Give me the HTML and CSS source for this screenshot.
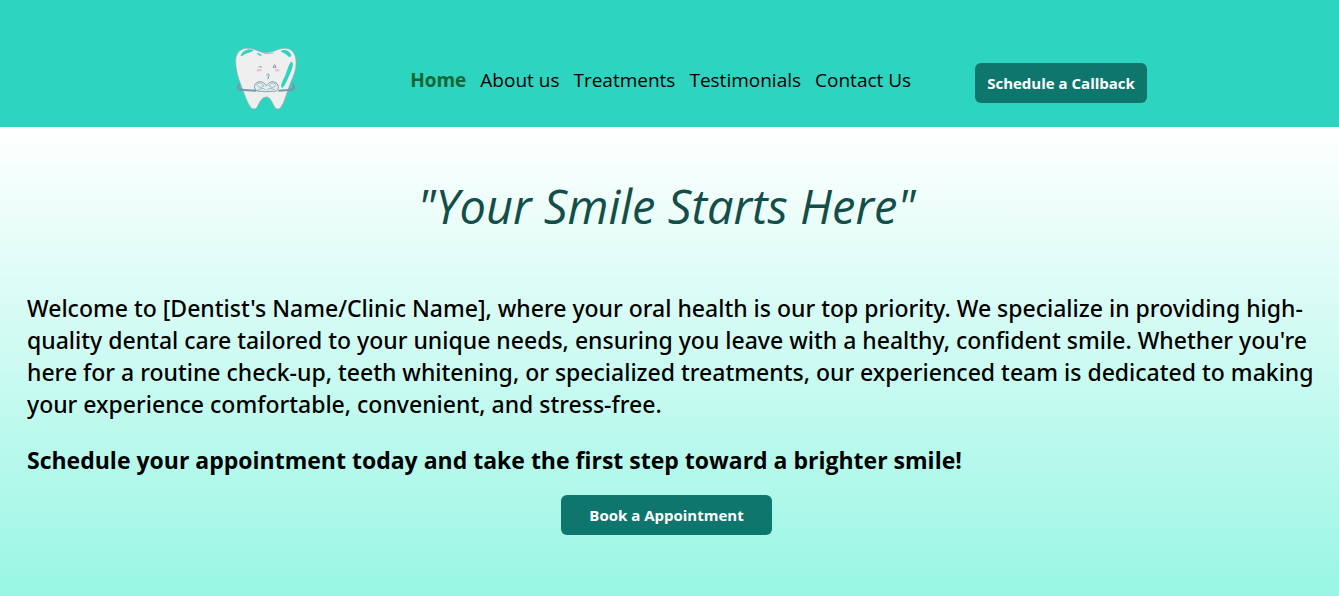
FILE: index.html
```html
<!DOCTYPE html>
<html lang="en">
<head>
<meta charset="utf-8">
<meta name="viewport" content="width=device-width, initial-scale=1">
<title>Dental Clinic</title>
<link rel="stylesheet" href="styles.css">
</head>
<body>
<header class="header">
  <a class="logo" href="#" aria-label="Home page">
    <svg class="logo-image" viewBox="0 0 240 228" aria-hidden="true">
      <path d="M42 130C32 138 34 150 48 151L92 152M198 130C208 138 206 150 192 151L156 152" fill="none" stroke="#6f9fae" stroke-width="6"/>
      <path d="M62 25C40 26 29 42 29 64C29 90 36 112 46 138C54 158 62 186 74 202C80 209 90 208 94 200C102 184 108 171 121 171C134 171 138 188 146 201C150 209 160 209 165 201C177 184 182 158 191 136C200 112 212 92 210 62C208 38 196 25 176 25C155 25 143 38 121 38C100 38 86 24 62 25Z" fill="#efeff0" stroke="#9ba9b0" stroke-width="2"/>
      <path d="M44 47C50 31 66 26 82 30C79 38 64 38 56 43C51 46 48 50 44 47Z" fill="#2dd4bf"/>
      <path d="M92 39C98 38 106 42 108 47C103 49 96 45 92 39ZM164 33C178 26 192 33 196 47C191 56 186 48 180 43C175 39 167 38 164 33ZM197 65C205 69 199 87 190 106C183 121 177 138 169 144C162 142 167 127 173 116C184 96 187 69 197 65Z" fill="#2dd4bf"/>
      <path d="M109 38C119 44 130 41 143 39" fill="none" stroke="#8ba4ad" stroke-width="2"/>
      <path d="M98 80L108 81M141 82H150L146 74ZM122 106C121 101 131 101 130 107L125 110L129 114L124 117" fill="none" stroke="#7d9eab" stroke-width="3"/>
      <path d="M93 91H106M147 91H160" stroke="#f3b6cf" stroke-width="6"/>
      <path d="M36 140C37 149 44 150 54 150L91 152M203 140C202 149 196 150 187 150L157 152" fill="none" stroke="#7299ac" stroke-width="6"/>
      <path d="M121 138C114 124 97 121 89 131C80 142 90 156 104 154C113 153 119 157 121 154C127 157 133 153 142 154C155 156 162 142 153 131C144 121 128 124 121 138Z" fill="#e5edef" stroke="#7d9eab" stroke-width="3"/>
      <path d="M91 135C99 127 108 128 113 138L103 143L94 137M151 135C143 127 134 128 129 138L139 143L149 137M96 149L111 145L119 150M147 149L132 145L123 150" fill="none" stroke="#7d9eab" stroke-width="2"/>
    </svg>
  </a>
  <nav class="nav" aria-label="Main">
    <a class="nav-link nav-link-active" href="#">Home</a>
    <a class="nav-link" href="#about">About us</a>
    <a class="nav-link" href="#treatments">Treatments</a>
    <a class="nav-link" href="#testimonials">Testimonials</a>
    <a class="nav-link" href="#contact">Contact Us</a>
  </nav>
  <button class="button" type="button">Schedule a Callback</button>
</header>
<main class="hero">
  <h1 class="title">"Your Smile Starts Here"</h1>
  <p class="intro">Welcome to [Dentist's Name/Clinic Name], where your oral health is our top priority. We specialize in providing high-quality dental care tailored to your unique needs, ensuring you leave with a healthy, confident smile. Whether you're here for a routine check-up, teeth whitening, or specialized treatments, our experienced team is dedicated to making your experience comfortable, convenient, and stress-free.</p>
  <p class="intro intro-strong">Schedule your appointment today and take the first step toward a brighter smile!</p>
  <button class="button button-wide" type="button">Book a Appointment</button>
</main>
</body>
</html>
```
FILE: styles.css
```css
* { box-sizing: border-box; }
body {
  margin: 0;
  min-height: 100vh;
  display: flex;
  flex-direction: column;
  font-family: "Open Sans", "Noto Sans", sans-serif;
  color: #000;
}
.header {
  display: flex;
  justify-content: center;
  align-items: flex-end;
  padding: 40px 0 24px 34px;
  background: #2dd4bf;
}
.logo { margin: 0 104px -13px 0; }
.logo-image { display: block; width: 80px; height: 76px; }
.nav { display: flex; gap: 14px; margin: 0 64px 9px 0; }
.nav-link { color: inherit; text-decoration: none; font-size: 19px; line-height: 28px; }
.nav-link-active { color: #166534; font-weight: 700; }
.button {
  height: 40px;
  padding: 0 12px;
  border: 0;
  border-radius: 6px;
  background: #0f766e;
  color: #fff;
  font: 700 15px/24px "Open Sans", "Noto Sans", sans-serif;
}
.hero {
  flex: 1;
  display: flex;
  flex-direction: column;
  padding: 55px 6px 60px 0;
  background: linear-gradient(#fff, #99f6e4);
}
.title {
  margin: 0 0 62px;
  text-align: center;
  color: #134e4a;
  font-size: 47px;
  font-style: italic;
  font-weight: 400;
  line-height: 48px;
}
.intro {
  margin: 0 0 24px;
  padding: 0 8px 0 27px;
  font-family: "Noto Sans", "Open Sans", sans-serif;
  font-size: 23px;
  font-weight: 500;
  line-height: 32px;
}
.intro-strong {
  margin-bottom: 19px;
  font-family: "Open Sans", "Noto Sans", sans-serif;
  font-weight: 700;
}
.button-wide { align-self: center; padding: 0 28px; }
```
